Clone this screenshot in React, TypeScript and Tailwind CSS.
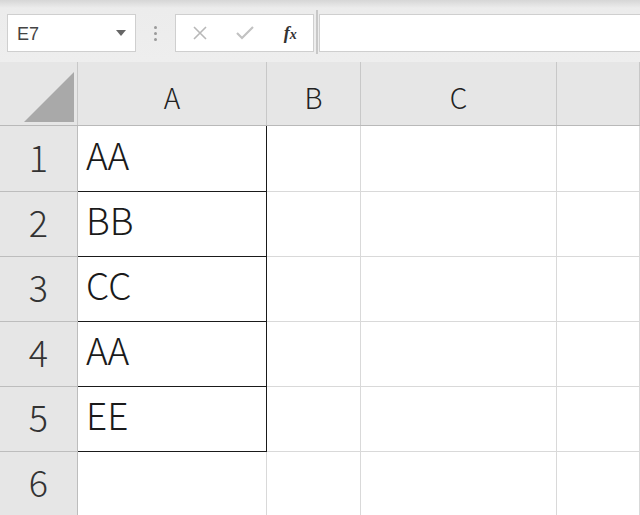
import React from "react";

const font = { fontFamily: '"Noto Sans CJK JP", "Noto Sans", sans-serif' };

const cols = [
  { label: "A", w: "w-[189px]" },
  { label: "B", w: "w-[94px]" },
  { label: "C", w: "w-[196px]" },
  { label: "", w: "flex-1" },
];

const rows = [
  { n: "1", h: "h-[66px]", v: "AA" },
  { n: "2", h: "h-[65px]", v: "BB" },
  { n: "3", h: "h-[65px]", v: "CC" },
  { n: "4", h: "h-[65px]", v: "AA" },
  { n: "5", h: "h-[65px]", v: "EE" },
  { n: "6", h: "h-[65px]", v: "" },
];

export default function App() {
  return (
    <div className="w-[640px] h-[515px] overflow-hidden bg-white text-[#222]" style={font}>
      {/* toolbar */}
      <div className="h-[62px] bg-[linear-gradient(#d6d6d6_0px,#ececec_8px,#eeeeee_100%)] flex items-start pt-[14px]">
        <div className="ml-[7px] w-[129px] h-[38px] bg-white border border-[#cfcfcf] flex items-center pl-[9px] pr-[9px]">
          <span className="text-[18px] text-[#444] flex-1 pt-[3px]" style={{ fontFamily: '"Liberation Sans", sans-serif' }}>E7</span>
          <svg width="10" height="6" viewBox="0 0 10 6"><path d="M0 0 L10 0 L5 6 Z" fill="#666" /></svg>
        </div>
        <div className="w-[39px] h-[38px] flex flex-col items-center justify-center gap-[3px]">
          <div className="w-[3px] h-[3px] rounded-full bg-[#9a9a9a]" />
          <div className="w-[3px] h-[3px] rounded-full bg-[#9a9a9a]" />
          <div className="w-[3px] h-[3px] rounded-full bg-[#9a9a9a]" />
        </div>
        <div className="w-[139px] h-[38px] bg-white border border-[#cfcfcf] flex items-center">
          <div className="w-[46px] flex justify-center pl-[2px]">
            <svg width="16" height="16" viewBox="0 0 16 16"><path d="M2 2 L14 14 M14 2 L2 14" stroke="#b8b8b8" strokeWidth="1.6" /></svg>
          </div>
          <div className="w-[46px] flex justify-center">
            <svg width="20" height="16" viewBox="0 0 20 16"><path d="M2 8 L7 13 L18 2" stroke="#c2c2c2" strokeWidth="2.2" fill="none" /></svg>
          </div>
          <div className="w-[46px] flex justify-center">
            <span className="text-[18px] italic text-[#333] font-semibold" style={{ fontFamily: '"Liberation Serif", serif' }}>f<span className="text-[14px]">x</span></span>
          </div>
        </div>
        <div className="w-[5px] h-[44px] -mt-[4px] flex justify-center">
          <div className="w-[2px] h-full bg-[#c8c8c8]" />
        </div>
        <div className="flex-1 h-[38px] bg-white border border-r-0 border-[#cfcfcf]" />
      </div>

      {/* header row */}
      <div className="flex h-[64px] bg-[#e6e6e6] border-b border-[#b9b9b9]">
        <div className="w-[78px] border-r border-[#c8c8c8] relative">
          <svg className="absolute left-[24px] top-[10px]" width="50" height="50" viewBox="0 0 50 50">
            <path d="M50 0 L50 50 L0 50 Z" fill="#a9a9a9" />
          </svg>
        </div>
        {cols.map((c, i) => (
          <div key={i} className={`${c.w} border-r border-[#c8c8c8] flex items-center justify-center text-[28px] font-light text-[#222] pt-[6px]`}>
            {c.label}
          </div>
        ))}
      </div>

      {/* rows */}
      {rows.map((r, ri) => (
        <div key={ri} className={`flex ${r.h}`}>
          <div className="w-[78px] bg-[#e6e6e6] border-r border-b border-[#bdbdbd] flex items-center justify-center text-[36px] font-light text-[#333] pb-[6px]">
            {r.n}
          </div>
          {cols.map((c, ci) => {
            const boxed = ci === 0 && ri < 5;
            return (
              <div
                key={ci}
                className={`${c.w} border-r border-b ${boxed ? "border-[#1a1a1a]" : "border-[#d9d9d9]"} flex items-center pl-[8px] text-[37px] font-light text-[#1a1a1a] pb-[8px]`}
              >
                {ci === 0 ? r.v : ""}
              </div>
            );
          })}
        </div>
      ))}
    </div>
  );
}
